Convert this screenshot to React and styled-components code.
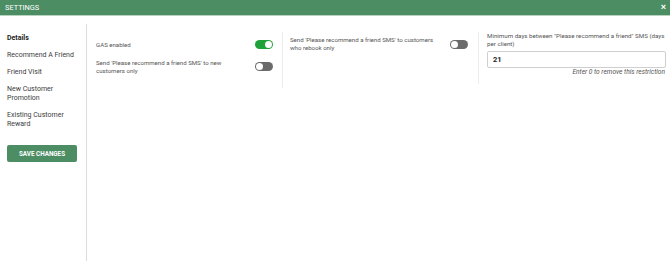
import styled, { createGlobalStyle } from 'styled-components';

const GlobalStyle = createGlobalStyle`
    body {
        margin: 0;
        background: white;
        font-family: Roboto, "Liberation Sans", sans-serif;
    }
`;

const Page = styled.div`
    width: 670px;
    height: 261px;
    display: flex;
    flex-direction: column;
    overflow: hidden;
`;

const Header = styled.div`
    height: 15px;
    background-color: #4c8d64;
    border-bottom: 1px solid #b9d3c2;
    display: flex;
    align-items: center;
    justify-content: space-between;
    padding: 0 4px 0 5px;
    color: white;
    font-size: 7.4px;
`;

const CloseButton = styled.button`
    background: transparent;
    border: none;
    color: white;
    font-size: 9px;
    font-weight: bold;
    padding: 0;
    line-height: 1;
`;

const Body = styled.div`
    flex: 1;
    display: flex;
    padding-top: 8px;
`;

const Sidebar = styled.div`
    width: 87px;
    border-right: 1px solid #dcdcdc;
    padding: 10px 0 0 7px;
    box-sizing: border-box;
    display: flex;
    flex-direction: column;
`;

const NavItem = styled.div`
    font-size: 7px;
    line-height: 9px;
    color: ${(p) => (p.active ? '#222' : '#3c3c3c')};
    font-weight: ${(p) => (p.active ? 'bold' : 'normal')};
    margin-bottom: 8px;
    width: 72px;
`;

const SaveButton = styled.button`
    margin-top: 8px;
    width: 70px;
    height: 17px;
    border: none;
    border-radius: 2px;
    background-color: #4c8d64;
    color: white;
    font-family: Roboto, "Liberation Sans", sans-serif;
    font-size: 6.3px;
    font-weight: bold;
    padding: 0;
`;

const Content = styled.div`
    flex: 1;
    display: grid;
    grid-template-columns: 196px 196px 1fr;
    align-items: start;
    padding: 8px 4px 0 0;
`;

const Column = styled.div`
    border-right: ${(p) => (p.last ? 'none' : '1px solid #ececec')};
    min-height: 48px;
    padding: ${(p) => p.pad || '0 9px 0 8px'};
    display: flex;
    flex-direction: column;
`;

const Row = styled.div`
    display: flex;
    align-items: center;
    justify-content: space-between;
    gap: 10px;
    margin-bottom: 9.5px;
`;

const Label = styled.div`
    font-size: 6.1px;
    line-height: 8px;
    color: #555;
    max-width: ${(p) => p.width || '135px'};
`;

const Toggle = styled.div`
    width: 18px;
    height: 9px;
    border-radius: 5px;
    background-color: ${(p) => (p.on ? '#1fa23a' : '#6b6b6b')};
    flex-shrink: 0;
    display: flex;
    align-items: center;
    justify-content: ${(p) => (p.on ? 'flex-end' : 'flex-start')};
    padding: 0 1px;
    box-sizing: border-box;

    &::after {
        content: '';
        width: 7px;
        height: 7px;
        border-radius: 50%;
        background: white;
    }
`;

const FieldLabel = styled.div`
    font-size: 6.2px;
    line-height: 8px;
    color: #555;
`;

const NumberInput = styled.input`
    height: 17px;
    box-sizing: border-box;
    border: 1px solid #cfcfcf;
    border-radius: 2px;
    padding: 0 5px;
    margin-top: 3px;
    font-family: Roboto, "Liberation Sans", sans-serif;
    font-size: 7.5px;
    font-weight: bold;
    color: #222;
`;

const Hint = styled.div`
    font-size: 6.6px;
    line-height: 8px;
    font-style: italic;
    color: #555;
    text-align: right;
    padding-right: 1px;
`;

export default function App() {
    return (
        <Page>
            <GlobalStyle />
            <Header>
                <span>SETTINGS</span>
                <CloseButton>×</CloseButton>
            </Header>
            <Body>
                <Sidebar>
                    <NavItem active>Details</NavItem>
                    <NavItem>Recommend A Friend</NavItem>
                    <NavItem>Friend Visit</NavItem>
                    <NavItem>New Customer Promotion</NavItem>
                    <NavItem>Existing Customer Reward</NavItem>
                    <SaveButton>SAVE CHANGES</SaveButton>
                </Sidebar>
                <Content>
                    <Column pad="8px 9px 0 9px">
                        <Row>
                            <Label>GAS enabled</Label>
                            <Toggle on />
                        </Row>
                        <Row>
                            <Label>Send 'Please recommend a friend SMS' to new customers only</Label>
                            <Toggle />
                        </Row>
                    </Column>
                    <Column pad="4px 10px 0 7px">
                        <Row>
                            <Label width="147px">Send 'Please recommend a friend SMS' to customers who rebook only</Label>
                            <Toggle />
                        </Row>
                    </Column>
                    <Column last pad="0 0 0 8px">
                        <FieldLabel>Minimum days between "Please recommend a friend" SMS (days per client)</FieldLabel>
                        <NumberInput defaultValue="21" />
                        <Hint>Enter 0 to remove this restriction</Hint>
                    </Column>
                </Content>
            </Body>
        </Page>
    );
}
